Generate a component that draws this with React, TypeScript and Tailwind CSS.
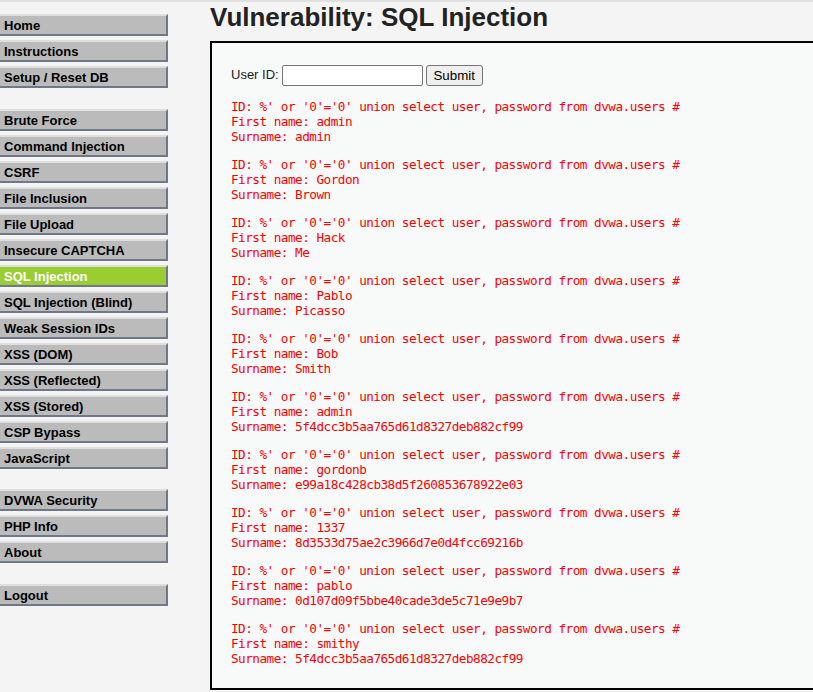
import React from 'react';

const menuGroups: string[][] = [
  ['Home', 'Instructions', 'Setup / Reset DB'],
  [
    'Brute Force',
    'Command Injection',
    'CSRF',
    'File Inclusion',
    'File Upload',
    'Insecure CAPTCHA',
    'SQL Injection',
    'SQL Injection (Blind)',
    'Weak Session IDs',
    'XSS (DOM)',
    'XSS (Reflected)',
    'XSS (Stored)',
    'CSP Bypass',
    'JavaScript',
  ],
  ['DVWA Security', 'PHP Info', 'About'],
  ['Logout'],
];
const groupMargins = ['mt-[12px]', 'mt-[21px]', 'mt-[20px]', 'mt-[21px]'];

const rows: [string, string][] = [
  ['admin', 'admin'],
  ['Gordon', 'Brown'],
  ['Hack', 'Me'],
  ['Pablo', 'Picasso'],
  ['Bob', 'Smith'],
  ['admin', '5f4dcc3b5aa765d61d8327deb882cf99'],
  ['gordonb', 'e99a18c428cb38d5f260853678922e03'],
  ['1337', '8d3533d75ae2c3966d7e0d4fcc69216b'],
  ['pablo', '0d107d09f5bbe40cade3de5c71e9e9b7'],
  ['smithy', '5f4dcc3b5aa765d61d8327deb882cf99'],
];

const MenuItem: React.FC<{ label: string }> = ({ label }) => {
  const active = label === 'SQL Injection';
  return (
    <div
      className={`h-[22px] mb-[4px] pl-[4px] flex items-center border-t-2 border-t-[#dedede] border-r-2 border-b-2 border-r-[#6e7888] border-b-[#6e7888] text-[13px] font-bold leading-none ${
        active ? 'bg-[#9acd32] text-white' : 'bg-[#bbbbbb] text-black'
      }`}
    >
      {label}
    </div>
  );
};

export default function App() {
  return (
    <div
      className="min-h-[692px] bg-[#f4f4f4] border-t-2 border-[#e0e0e0] flex overflow-hidden"
      style={{ fontFamily: '"Liberation Sans", Arial, sans-serif' }}
    >
      <div className="w-[168px] shrink-0">
        {menuGroups.map((g, i) => (
          <div key={i} className={groupMargins[i]}>
            {g.map((l) => (
              <MenuItem key={l} label={l} />
            ))}
          </div>
        ))}
      </div>
      <div className="ml-[42px] flex-1 min-w-0">
        <h1 className="text-[26px] font-bold text-[#222] leading-[30px] h-[39px]">
          Vulnerability: SQL Injection
        </h1>
        <div className="w-[640px] bg-[#f8f9f9] border-l-2 border-t-2 border-b-2 border-black pt-[21px] pl-[19px] pb-[22px]">
          <div className="flex items-center h-[22px] text-[13px] text-[#222]">
            <span>User ID:</span>
            <input className="ml-[3px] w-[141px] h-[21px] bg-white border border-[#767676] rounded-[2px]" />
            <button className="ml-[3px] w-[57px] h-[21px] bg-[#efefef] border border-[#767676] rounded-[3px] text-[13.3px] text-black">
              Submit
            </button>
          </div>
          <div
            className="text-[#ff0000] text-[12.7px] leading-[15px] tracking-[-0.52px]"
            style={{ fontFamily: '"DejaVu Sans Mono", monospace' }}
          >
            {rows.map(([f, s], i) => (
              <div key={i} className="mt-[13px] whitespace-pre">
                <div>ID: %' or '0'='0' union select user, password from dvwa.users #</div>
                <div>First name: {f}</div>
                <div>Surname: {s}</div>
              </div>
            ))}
          </div>
        </div>
      </div>
    </div>
  );
}
